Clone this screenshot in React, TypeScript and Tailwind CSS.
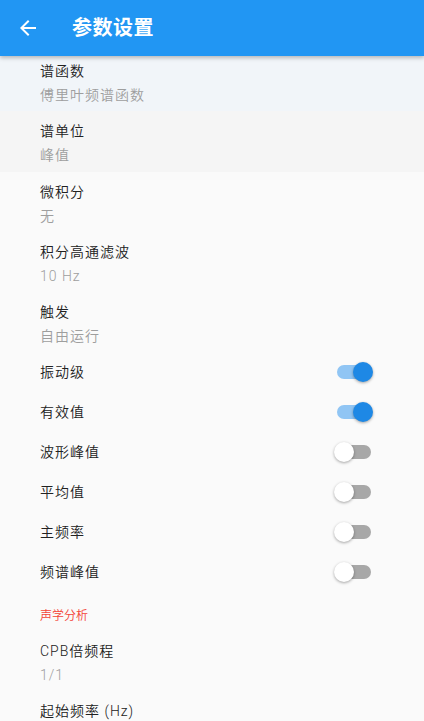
import React from "react";

const font = { fontFamily: 'Roboto, "Noto Sans CJK SC", sans-serif' };

function Row({ title, sub, bg }: { title: string; sub: string; bg?: string }) {
  return (
    <div className={`h-[60px] pl-10 pr-4 pt-[8px] ${bg ?? ""}`}>
      <div className="text-[14px] leading-[24px] tracking-[1px] font-[350] text-[#212121]">{title}</div>
      <div className="text-[14px] leading-[24px] tracking-[1px] font-[350] text-[#9e9e9e]">{sub}</div>
    </div>
  );
}

function Toggle({ on }: { on: boolean }) {
  return (
    <div className="relative w-[40px] h-[20px] flex items-center">
      <div
        className={`absolute left-[3px] w-[34px] h-[14px] rounded-full ${
          on ? "bg-[#90c5f4]" : "bg-[#a8a8a8]"
        }`}
      />
      <div
        className={`absolute top-0 w-[20px] h-[20px] rounded-full shadow-[0_1px_3px_rgba(0,0,0,0.35)] ${
          on ? "left-[19px] bg-[#1e88e5]" : "left-0 bg-white"
        }`}
      />
    </div>
  );
}

function SwitchRow({ title, on }: { title: string; on: boolean }) {
  return (
    <div className="h-[40px] pl-10 pr-[50px] flex items-center justify-between">
      <div className="text-[14px] tracking-[1px] font-[350] text-[#212121]">{title}</div>
      <Toggle on={on} />
    </div>
  );
}

export default function App() {
  return (
    <div className="w-[424px] h-[721px] overflow-hidden bg-[#fafafa]" style={font}>
      <div className="relative z-10 h-[56px] bg-[#2196f3] flex items-center shadow-[0_2px_4px_rgba(0,0,0,0.25)]">
        <div className="w-[56px] pl-4 flex items-center">
          <svg width="24" height="24" viewBox="0 0 24 24" fill="white">
            <path d="M20 11H7.83l5.59-5.59L12 4l-8 8 8 8 1.41-1.41L7.83 13H20v-2z" />
          </svg>
        </div>
        <div className="ml-4 text-[20px] font-bold text-white tracking-[0.5px]">参数设置</div>
      </div>
      <div className="h-[55px] pl-10 pr-4 pt-[3px] bg-[#f1f5f9]">
        <div className="text-[14px] leading-[24px] tracking-[1px] font-[350] text-[#212121]">谱函数</div>
        <div className="text-[14px] leading-[24px] tracking-[1px] font-[350] text-[#9e9e9e]">傅里叶频谱函数</div>
      </div>
      <Row title="谱单位" sub="峰值" bg="bg-[#f5f5f5] h-[61px]" />
      <Row title="微积分" sub="无" />
      <Row title="积分高通滤波" sub="10 Hz" />
      <Row title="触发" sub="自由运行" />
      <SwitchRow title="振动级" on />
      <SwitchRow title="有效值" on />
      <SwitchRow title="波形峰值" on={false} />
      <SwitchRow title="平均值" on={false} />
      <SwitchRow title="主频率" on={false} />
      <SwitchRow title="频谱峰值" on={false} />
      <div className="h-[39px] pl-10 pt-[16px] text-[12px] leading-[16px] font-[350] text-[#f44336]">声学分析</div>
      <Row title="CPB倍频程" sub="1/1" />
      <Row title="起始频率 (Hz)" sub="" />
    </div>
  );
}
